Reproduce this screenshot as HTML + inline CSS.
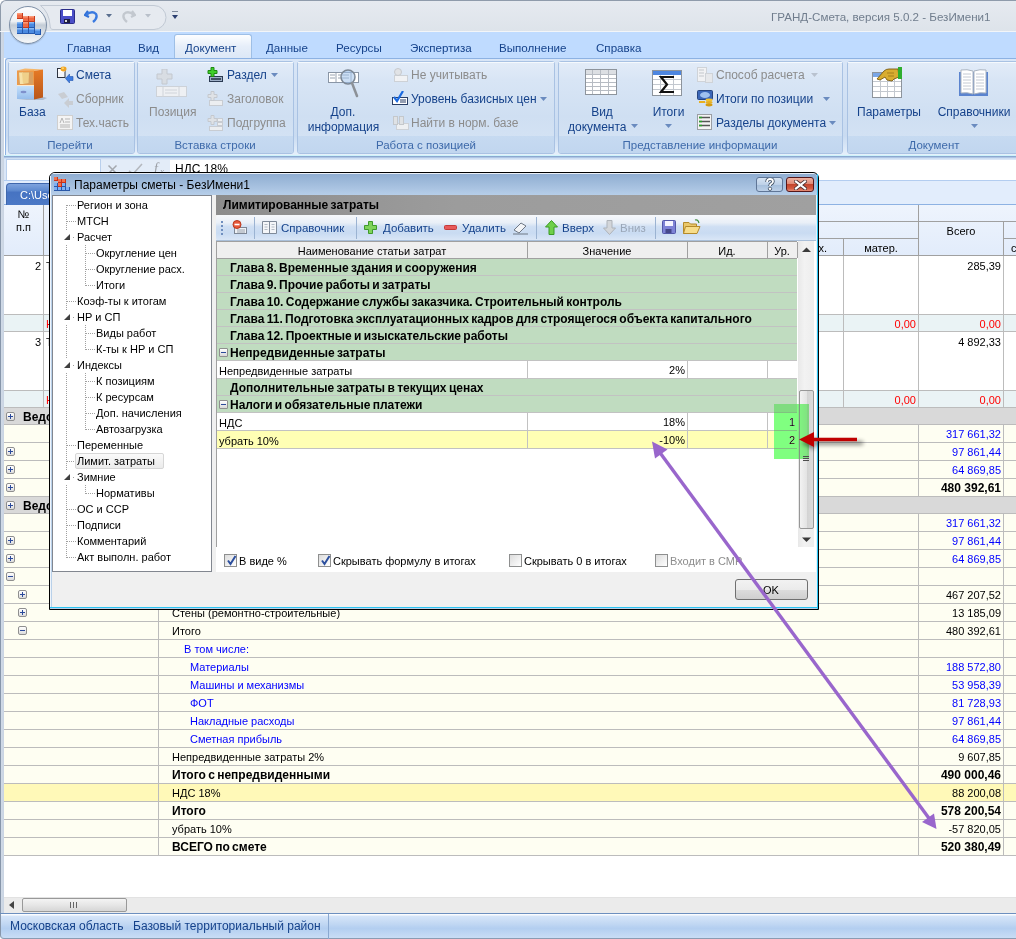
<!DOCTYPE html><html><head><meta charset="utf-8"><style>
*{margin:0;padding:0;box-sizing:border-box}
html,body{width:1016px;height:939px;overflow:hidden;background:#fff}
body{position:relative;font-family:"Liberation Sans",sans-serif;font-size:11px;color:#000}
div,svg{position:absolute}
.t{white-space:nowrap;line-height:16px;font-size:11px}
.b{font-weight:bold;font-size:12px;word-spacing:-1px}
.rb{color:#15428b;font-size:11.5px;line-height:16px;white-space:nowrap}
.gr{color:#8d8d8d}
.gl{color:#3e6aaa;font-size:11.5px;line-height:16px;white-space:nowrap}
</style></head><body>
<div style="left:0px;top:0px;width:1016px;height:939px;background:#fff"></div>
<div style="left:0px;top:0px;width:1016px;height:32px;background:linear-gradient(#e6eaf0,#dde3ea);border-top:1px solid #8f9bab;border-left:1px solid #8f9bab;border-top-left-radius:6px"></div>
<div style="left:0px;top:31px;width:1016px;height:1px;background:#f2f5f8"></div>
<svg style="left:40px;top:4px" width="130" height="27" viewBox="0 0 130 27"><path d="M0.5 1.5 H114 A12 12 0 0 1 114 25.5 H13 Q10 25.5 10 21 Q9 8 0.5 1.5 Z" fill="#e6eaf0" stroke="#c1c9d4"/></svg>
<svg style="left:60px;top:9px" width="15" height="15" viewBox="0 0 15 15"><rect x="0.5" y="0.5" width="14" height="14" rx="1" fill="#4b4fc8" stroke="#2a2c88"/><rect x="3" y="1" width="9" height="6" fill="#fff"/><rect x="4" y="10" width="6" height="4" fill="#1d1d40"/><rect x="5" y="11" width="2" height="2" fill="#ddd"/></svg>
<svg style="left:84px;top:9px" width="15" height="15" viewBox="0 0 15 15"><path d="M4 2 L1 6 L5 8" stroke="#2f6fd6" stroke-width="2.2" fill="none"/><path d="M2 6 Q8 1 12 5 Q14 9 9 13" stroke="#3a7ae0" stroke-width="2.4" fill="none"/></svg>
<svg style="left:106px;top:14px" width="6" height="4"><path d="M0 0 H6 L3 3.5 Z" fill="#5a6f8f"/></svg>
<svg style="left:121px;top:9px" width="15" height="15" viewBox="0 0 15 15"><path d="M11 2 L14 6 L10 8" stroke="#c3c8cf" stroke-width="2.2" fill="none"/><path d="M13 6 Q7 1 3 5 Q1 9 6 13" stroke="#c3c8cf" stroke-width="2.4" fill="none"/></svg>
<svg style="left:145px;top:14px" width="6" height="4"><path d="M0 0 H6 L3 3.5 Z" fill="#b9c0ca"/></svg>
<svg style="left:172px;top:11px" width="7" height="11"><path d="M0 0 H6" stroke="#394a66" stroke-width="1.2"/><path d="M0 4 H6 L3 8 Z" fill="#2b3f70"/></svg>
<div class="t" style="left:771px;top:9px;color:#707d8d;font-size:11.6px;line-height:16px">ГРАНД-Смета, версия 5.0.2 - БезИмени1</div>
<div style="left:0px;top:32px;width:4px;height:881px;background:linear-gradient(90deg,#8796aa 0,#8796aa 1px,#d0dae7 1px,#c9d4e2)"></div>
<div style="left:4px;top:32px;width:1012px;height:26px;background:#bfdbff"></div>
<div style="left:5px;top:58px;width:1011px;height:97px;background:linear-gradient(#d9e6f7,#c9dbf1 80%,#e6f0fb);border:1px solid #8db2e3;border-right:none;border-bottom:none;border-radius:3px 0 0 0"></div>
<div style="left:174px;top:34px;width:78px;height:24px;border:1px solid #9ebfe6;border-bottom:none;border-radius:3px 3px 0 0;background:linear-gradient(#fdfeff,#e6eef9 50%,#dce8f7)"></div>
<div class="t" style="left:67px;top:40px;color:#15428b;font-size:11.6px;line-height:16px">Главная</div>
<div class="t" style="left:138px;top:40px;color:#15428b;font-size:11.6px;line-height:16px">Вид</div>
<div class="t" style="left:185px;top:40px;color:#15428b;font-size:11.6px;line-height:16px">Документ</div>
<div class="t" style="left:266px;top:40px;color:#15428b;font-size:11.6px;line-height:16px">Данные</div>
<div class="t" style="left:336px;top:40px;color:#15428b;font-size:11.6px;line-height:16px">Ресурсы</div>
<div class="t" style="left:410px;top:40px;color:#15428b;font-size:11.6px;line-height:16px">Экспертиза</div>
<div class="t" style="left:499px;top:40px;color:#15428b;font-size:11.6px;line-height:16px">Выполнение</div>
<div class="t" style="left:596px;top:40px;color:#15428b;font-size:11.6px;line-height:16px">Справка</div>
<div style="left:9px;top:6px;width:38px;height:38px;border-radius:50%;border:1px solid #7d8fa6;background:linear-gradient(#fdfdfe 0,#eef1f4 40%,#c3ccd6 50%,#d9dfe6 70%,#f6f8fa 100%);box-shadow:0 1px 1px rgba(0,0,0,0.15)"></div>
<svg style="left:16px;top:13px" width="26" height="23" viewBox="0 0 26 23"><rect x="1" y="0" width="6" height="6" fill="#ef6a45"/><rect x="1" y="0" width="6" height="1.5" fill="#fb9a78"/><path d="M1 5.5 H7 M6.5 0 V6" stroke="#c53a1c"/><rect x="7" y="3" width="6" height="6" fill="#ef6a45"/><rect x="7" y="3" width="6" height="1.5" fill="#fb9a78"/><path d="M7 8.5 H13 M12.5 3 V9" stroke="#c53a1c"/><rect x="13" y="3" width="6" height="6" fill="#ef6a45"/><rect x="13" y="3" width="6" height="1.5" fill="#fb9a78"/><path d="M13 8.5 H19 M18.5 3 V9" stroke="#c53a1c"/><rect x="7" y="9" width="6" height="6" fill="#ef6a45"/><rect x="7" y="9" width="6" height="1.5" fill="#fb9a78"/><path d="M7 14.5 H13 M12.5 9 V15" stroke="#c53a1c"/><rect x="1" y="9" width="6" height="6" fill="#4b8ae0"/><rect x="1" y="9" width="6" height="1.5" fill="#8cbcf5"/><path d="M1 14.5 H7 M6.5 9 V15" stroke="#2659ad"/><rect x="13" y="9" width="6" height="6" fill="#4b8ae0"/><rect x="13" y="9" width="6" height="1.5" fill="#8cbcf5"/><path d="M13 14.5 H19 M18.5 9 V15" stroke="#2659ad"/><rect x="1" y="15" width="6" height="6" fill="#4b8ae0"/><rect x="1" y="15" width="6" height="1.5" fill="#8cbcf5"/><path d="M1 20.5 H7 M6.5 15 V21" stroke="#2659ad"/><rect x="7" y="15" width="6" height="6" fill="#4b8ae0"/><rect x="7" y="15" width="6" height="1.5" fill="#8cbcf5"/><path d="M7 20.5 H13 M12.5 15 V21" stroke="#2659ad"/><rect x="13" y="15" width="6" height="6" fill="#4b8ae0"/><rect x="13" y="15" width="6" height="1.5" fill="#8cbcf5"/><path d="M13 20.5 H19 M18.5 15 V21" stroke="#2659ad"/><rect x="19" y="16" width="6" height="6" fill="#4b8ae0"/><rect x="19" y="16" width="6" height="1.5" fill="#8cbcf5"/><path d="M19 21.5 H25 M24.5 16 V22" stroke="#2659ad"/></svg>
<div style="left:8px;top:61px;width:127px;height:93px;border:1px solid #a9c2e3;border-radius:3px;background:linear-gradient(#e3ecf8 0,#d8e5f5 20%,#cfdff2 60%,#d6e4f5)"></div>
<div style="left:9px;top:136px;width:125px;height:17px;background:linear-gradient(#c6daf1,#c1d6ef);border-radius:0 0 2px 2px"></div>
<div style="left:9px;top:62px;width:125px;height:1px;background:#f5f9fd"></div>
<div class="gl" style="left:-40.0px;top:137px;width:220px;text-align:center;">Перейти</div>
<div style="left:137px;top:61px;width:157px;height:93px;border:1px solid #a9c2e3;border-radius:3px;background:linear-gradient(#e3ecf8 0,#d8e5f5 20%,#cfdff2 60%,#d6e4f5)"></div>
<div style="left:138px;top:136px;width:155px;height:17px;background:linear-gradient(#c6daf1,#c1d6ef);border-radius:0 0 2px 2px"></div>
<div style="left:138px;top:62px;width:155px;height:1px;background:#f5f9fd"></div>
<div class="gl" style="left:105.0px;top:137px;width:220px;text-align:center;">Вставка строки</div>
<div style="left:297px;top:61px;width:258px;height:93px;border:1px solid #a9c2e3;border-radius:3px;background:linear-gradient(#e3ecf8 0,#d8e5f5 20%,#cfdff2 60%,#d6e4f5)"></div>
<div style="left:298px;top:136px;width:256px;height:17px;background:linear-gradient(#c6daf1,#c1d6ef);border-radius:0 0 2px 2px"></div>
<div style="left:298px;top:62px;width:256px;height:1px;background:#f5f9fd"></div>
<div class="gl" style="left:316.0px;top:137px;width:220px;text-align:center;">Работа с позицией</div>
<div style="left:558px;top:61px;width:285px;height:93px;border:1px solid #a9c2e3;border-radius:3px;background:linear-gradient(#e3ecf8 0,#d8e5f5 20%,#cfdff2 60%,#d6e4f5)"></div>
<div style="left:559px;top:136px;width:283px;height:17px;background:linear-gradient(#c6daf1,#c1d6ef);border-radius:0 0 2px 2px"></div>
<div style="left:559px;top:62px;width:283px;height:1px;background:#f5f9fd"></div>
<div class="gl" style="left:590.0px;top:137px;width:220px;text-align:center;">Представление информации</div>
<div style="left:847px;top:61px;width:173px;height:93px;border:1px solid #a9c2e3;border-radius:3px;background:linear-gradient(#e3ecf8 0,#d8e5f5 20%,#cfdff2 60%,#d6e4f5)"></div>
<div style="left:848px;top:136px;width:171px;height:17px;background:linear-gradient(#c6daf1,#c1d6ef);border-radius:0 0 2px 2px"></div>
<div style="left:848px;top:62px;width:171px;height:1px;background:#f5f9fd"></div>
<div class="gl" style="left:824.0px;top:137px;width:220px;text-align:center;">Документ</div>
<svg style="left:16px;top:67px" width="32" height="34" viewBox="0 0 32 34"><defs><linearGradient id="bz1" x1="0" y1="0" x2="0" y2="1"><stop offset="0" stop-color="#e67a26"/><stop offset="1" stop-color="#b9561a"/></linearGradient><linearGradient id="bz2" x1="0" y1="0" x2="0" y2="1"><stop offset="0" stop-color="#c4e0fb"/><stop offset="1" stop-color="#96bdec"/></linearGradient></defs><path d="M2 33 L27 33 L31 31 L28 30 Z" fill="rgba(60,80,110,0.25)"/><path d="M1 3.5 L9 1.5 L27 2.5 L18 4 Z" fill="#f6b76a"/><path d="M18 4 L27 2.5 L27 30.5 L18 32.5 Z" fill="url(#bz1)"/><rect x="1" y="3.5" width="17" height="15" fill="#ee9a48"/><rect x="2.5" y="5" width="14.5" height="12.5" fill="#d9a060"/><path d="M3 5.5 L7 5.5 L8 17 L4 17 Z" fill="#f7e2a8"/><path d="M6 5.5 L13 5.5 L12.5 16 L7 17 Z" fill="#efd08a"/><rect x="1" y="18" width="17" height="1.2" fill="#fbe9d0"/><rect x="1" y="19" width="17" height="13" fill="url(#bz2)"/><ellipse cx="7.5" cy="25" rx="3" ry="1.3" fill="#7e90cc"/></svg>
<div class="t" style="left:19px;top:104px;color:#15428b;font-size:12px;line-height:16px">База</div>
<svg style="left:57px;top:66px" width="17" height="18" viewBox="0 0 17 18"><rect x="0.5" y="2.5" width="7.5" height="9" fill="#f4f6fa" stroke="#2e3440"/><rect x="1" y="3" width="6.5" height="3" fill="#fff"/><ellipse cx="6.5" cy="3" rx="3" ry="2.4" fill="#f0a424"/><ellipse cx="5.8" cy="2.3" rx="1.3" ry="1" fill="#ffd36a"/><path d="M8.5 12.5 L12.5 8 V10.5 H16 V14.5 H12.5 V17 Z" fill="#3b7be2" stroke="#2456b0" stroke-width="0.6"/></svg>
<div class="t" style="left:76px;top:67px;color:#15428b;font-size:12px;line-height:16px">Смета</div>
<svg style="left:57px;top:91px" width="17" height="17" viewBox="0 0 17 17"><path d="M1 3 L7 1 L11 6 L5 8 Z" fill="#c9cdd3"/><path d="M16 10 L12 10 L12 7 L7 12 L12 17 L12 14 L16 14 Z" fill="#c9cdd3"/></svg>
<div class="t" style="left:76px;top:91px;color:#8c8c8c;font-size:12px;line-height:16px">Сборник</div>
<svg style="left:57px;top:115px" width="16" height="15" viewBox="0 0 16 15"><rect x="0.5" y="0.5" width="15" height="14" fill="#f4f4f4" stroke="#cfcfcf"/><path d="M3 8 L5 3 L7 8 M8 4 H13 M8 7 H13 M3 10 H13 M3 12 H13" stroke="#b5b5b5" fill="none"/></svg>
<div class="t" style="left:76px;top:115px;color:#8c8c8c;font-size:12px;line-height:16px">Тех.часть</div>
<svg style="left:156px;top:69px" width="32" height="29" viewBox="0 0 32 29"><path d="M6 0 H11 V5 H16 V10 H11 V15 H6 V10 H1 V5 H6 Z" fill="#d8dde3" stroke="#c3c8cf"/><rect x="0.5" y="17.5" width="30" height="10" fill="#eef0f3" stroke="#cdd2d8"/><path d="M7 18 V28 M23 18 V28 M9 21 H21 M9 24 H21" stroke="#d0d4da"/></svg>
<div class="t" style="left:149px;top:104px;color:#8c8c8c;font-size:12px;line-height:16px">Позиция</div>
<svg style="left:207px;top:67px" width="17" height="16" viewBox="0 0 17 16"><rect x="2.5" y="9.5" width="13" height="5" fill="#9fb0c8" stroke="#2b3a52"/><path d="M4 12 H14" stroke="#1b2738" stroke-width="1.4"/><path d="M4 0.5 H7 V3.5 H10 V6.5 H7 V9.5 H4 V6.5 H1 V3.5 H4 Z" fill="#3fcf2a" stroke="#1f8a10"/></svg>
<div class="t" style="left:227px;top:67px;color:#15428b;font-size:12px;line-height:16px">Раздел</div>
<svg style="left:271px;top:73px" width="7" height="4"><path d="M0 0 L7 0 L3.5 4 Z" fill="#6a8bbf"/></svg>
<svg style="left:207px;top:91px" width="17" height="16" viewBox="0 0 17 16"><rect x="2.5" y="9.5" width="13" height="5" fill="#eceef1" stroke="#c8ccd2"/><path d="M4 0.5 H7 V3.5 H10 V6.5 H7 V9.5 H4 V6.5 H1 V3.5 H4 Z" fill="#dfe2e6" stroke="#c4c8ce"/></svg>
<div class="t" style="left:227px;top:91px;color:#8c8c8c;font-size:12px;line-height:16px">Заголовок</div>
<svg style="left:207px;top:115px" width="17" height="16" viewBox="0 0 17 16"><rect x="2.5" y="11.5" width="13" height="4" fill="#eceef1" stroke="#c8ccd2"/><rect x="10.5" y="3.5" width="5" height="3" fill="#eceef1" stroke="#c8ccd2"/><rect x="10.5" y="7.5" width="5" height="3" fill="#eceef1" stroke="#c8ccd2"/><path d="M4 0.5 H7 V3.5 H10 V6.5 H7 V9.5 H4 V6.5 H1 V3.5 H4 Z" fill="#dfe2e6" stroke="#c4c8ce"/></svg>
<div class="t" style="left:227px;top:115px;color:#8c8c8c;font-size:12px;line-height:16px">Подгруппа</div>
<svg style="left:327px;top:67px" width="34" height="32" viewBox="0 0 34 32"><rect x="1.5" y="5.5" width="30" height="10" fill="#fff" stroke="#8a96a6"/><path d="M9 6 V15 M24 6 V15 M3 8 H8 M3 11 H8 M11 8 H22 M11 11 H22" stroke="#9aa4b2"/><circle cx="21" cy="10" r="7" fill="rgba(160,195,235,0.55)" stroke="#7c8794" stroke-width="1.5"/><path d="M25 16 L30 29" stroke="#8c9197" stroke-width="2.5" stroke-linecap="round"/></svg>
<div class="t" style="left:303.0px;top:104px;width:80px;text-align:center;color:#15428b;font-size:12px;line-height:16px">Доп.</div>
<div class="t" style="left:293.5px;top:119px;width:100px;text-align:center;color:#15428b;font-size:12px;line-height:16px">информация</div>
<svg style="left:392px;top:68px" width="16" height="15" viewBox="0 0 16 15"><rect x="2.5" y="7.5" width="13" height="6" fill="#f1f2f4" stroke="#cdd1d6"/><circle cx="6" cy="4" r="3.5" fill="#e1e3e6" stroke="#c6c9cd"/></svg>
<div class="t" style="left:411px;top:67px;color:#8c8c8c;font-size:12px;line-height:16px">Не учитывать</div>
<svg style="left:392px;top:91px" width="16" height="15" viewBox="0 0 16 15"><rect x="0.5" y="6.5" width="15" height="7" fill="#fff" stroke="#2a3f66"/><path d="M8 9 H14 M8 11 H14" stroke="#2a3f66"/><path d="M2 6 L5 10 L11 0" stroke="#1a6ae0" stroke-width="2.2" fill="none"/></svg>
<div class="t" style="left:411px;top:91px;color:#15428b;font-size:12px;line-height:16px">Уровень базисных цен</div>
<svg style="left:540px;top:97px" width="7" height="4"><path d="M0 0 L7 0 L3.5 4 Z" fill="#6a8bbf"/></svg>
<svg style="left:392px;top:115px" width="17" height="16" viewBox="0 0 17 16"><rect x="4.5" y="8.5" width="12" height="6" fill="#eef0f2" stroke="#cdd1d6"/><rect x="1.5" y="1.5" width="4" height="8" fill="#dfe2e5" stroke="#c4c8cc"/><rect x="7.5" y="1.5" width="4" height="8" fill="#dfe2e5" stroke="#c4c8cc"/></svg>
<div class="t" style="left:411px;top:115px;color:#8c8c8c;font-size:12px;line-height:16px">Найти в норм. базе</div>
<svg style="left:585px;top:69px" width="33" height="27" viewBox="0 0 33 27"><rect x="0.5" y="0.5" width="31" height="25" fill="#fff" stroke="#8d949c"/><rect x="1" y="1" width="30" height="4" fill="#dcdfe3"/><path d="M1 5.5 H31 M1 9.5 H31 M1 13.5 H31 M1 17.5 H31 M1 21.5 H31 M7.5 1 V25 M15.5 1 V25 M23.5 1 V25" stroke="#b7bcc3"/></svg>
<div class="t" style="left:572.0px;top:104px;width:60px;text-align:center;color:#15428b;font-size:12px;line-height:16px">Вид</div>
<div class="t" style="left:568px;top:119px;color:#15428b;font-size:12px;line-height:16px">документа</div>
<svg style="left:631px;top:124px" width="7" height="4"><path d="M0 0 L7 0 L3.5 4 Z" fill="#6a8bbf"/></svg>
<svg style="left:652px;top:70px" width="31" height="27" viewBox="0 0 31 27"><rect x="0.5" y="0.5" width="29" height="25" fill="#fff" stroke="#8d949c"/><rect x="1" y="1" width="28" height="4" fill="#4d86e0"/><path d="M1 9.5 H29 M1 14.5 H29 M1 19.5 H29 M8.5 5 V25 M21.5 5 V25" stroke="#c3c8cf"/><path d="M22 7 H9 L15 14.5 L9 22 H22" stroke="#111" stroke-width="2.2" fill="none"/></svg>
<div class="t" style="left:638.5px;top:104px;width:60px;text-align:center;color:#15428b;font-size:12px;line-height:16px">Итоги</div>
<svg style="left:665px;top:124px" width="7" height="4"><path d="M0 0 L7 0 L3.5 4 Z" fill="#6a8bbf"/></svg>
<svg style="left:697px;top:67px" width="16" height="16" viewBox="0 0 16 16"><rect x="0.5" y="0.5" width="9" height="14" fill="#f1f2f4" stroke="#cfd3d8"/><rect x="8.5" y="6.5" width="7" height="9" fill="#e6e8eb" stroke="#cfd3d8"/><path d="M2 3 H7 M2 6 H7 M2 9 H7" stroke="#c3c7cc"/></svg>
<div class="t" style="left:716px;top:67px;color:#8c8c8c;font-size:12px;line-height:16px">Способ расчета</div>
<svg style="left:811px;top:73px" width="7" height="4"><path d="M0 0 L7 0 L3.5 4 Z" fill="#b9c2cf"/></svg>
<svg style="left:697px;top:90px" width="17" height="17" viewBox="0 0 17 17"><rect x="0.5" y="0.5" width="15" height="9" rx="1" fill="#3b67b8" stroke="#27457f"/><ellipse cx="8" cy="5" rx="5" ry="3" fill="#9fc1ef"/><ellipse cx="12" cy="10" rx="3.5" ry="1.4" fill="#f2c230"/><ellipse cx="12" cy="12.5" rx="3.5" ry="1.4" fill="#e8b020"/><ellipse cx="12" cy="15" rx="3.5" ry="1.4" fill="#d49a10"/><path d="M2 12 H8" stroke="#e8b020" stroke-width="2"/></svg>
<div class="t" style="left:716px;top:91px;color:#15428b;font-size:12px;line-height:16px">Итоги по позиции</div>
<svg style="left:823px;top:97px" width="7" height="4"><path d="M0 0 L7 0 L3.5 4 Z" fill="#6a8bbf"/></svg>
<svg style="left:697px;top:114px" width="15" height="16" viewBox="0 0 15 16"><rect x="0.5" y="0.5" width="14" height="15" fill="#f4f4f4" stroke="#9a9ea4"/><path d="M2 3.5 H13 M2 7.5 H13 M2 11.5 H13" stroke="#555" stroke-width="1.6"/><path d="M2 3.5 H5 M2 7.5 H5 M2 11.5 H5" stroke="#2aa02a" stroke-width="1.6"/></svg>
<div class="t" style="left:716px;top:115px;color:#15428b;font-size:12px;line-height:16px">Разделы документа</div>
<svg style="left:829px;top:121px" width="7" height="4"><path d="M0 0 L7 0 L3.5 4 Z" fill="#6a8bbf"/></svg>
<svg style="left:872px;top:67px" width="32" height="32" viewBox="0 0 32 32"><rect x="0.5" y="5.5" width="29" height="25" fill="#fff" stroke="#8d949c"/><rect x="1" y="6" width="28" height="4" fill="#7aa6e6"/><path d="M1 14.5 H29 M1 19.5 H29 M1 24.5 H29 M8.5 10 V30 M15.5 10 V30 M22.5 10 V30" stroke="#c3c8cf"/><path d="M5 12 L12 4 Q14 2 17 2 L26 2 L27 10 L22 12 L20 14 L15 13 L13 10 L8 13 Z" fill="#d9ad30" stroke="#7a5a10" stroke-width="0.9"/><path d="M15 6 L22 6 M16 9 L22 9" stroke="#9a7418" stroke-width="0.8"/><rect x="26" y="0" width="4" height="12" fill="#2fae2f"/></svg>
<div class="t" style="left:844.0px;top:104px;width:90px;text-align:center;color:#15428b;font-size:12px;line-height:16px">Параметры</div>
<svg style="left:958px;top:69px" width="31" height="28" viewBox="0 0 31 28"><path d="M1 3 H30 V27 H1 Z" fill="#5b84cf"/><path d="M3 1 Q9 0 15 2 V25 Q9 23 3 24 Z" fill="#fff" stroke="#a9b3c0"/><path d="M16 2 Q22 0 28 1 V24 Q22 23 16 25 Z" fill="#fff" stroke="#a9b3c0"/><path d="M5 5 H13 M5 8 H13 M5 11 H13 M5 14 H13 M5 17 H13 M5 20 H13 M18 5 H26 M18 8 H26 M18 11 H26 M18 14 H26 M18 17 H26 M18 20 H26" stroke="#c4cad3"/></svg>
<div class="t" style="left:929.0px;top:104px;width:90px;text-align:center;color:#15428b;font-size:12px;line-height:16px">Справочники</div>
<svg style="left:971px;top:124px" width="7" height="4"><path d="M0 0 L7 0 L3.5 4 Z" fill="#6a8bbf"/></svg>
<div style="left:4px;top:155px;width:1012px;height:25px;background:linear-gradient(#cdf3fb 0,#cdf3fb 1px,#7e9bc4 1px,#98b6dd 2px,#c3d6ee 3px,#dbe7f7 4px,#dbe7f7)"></div>
<div style="left:6px;top:159px;width:95px;height:22px;background:#fff;border:1px solid #b9cfec"></div>
<div style="left:101px;top:160px;width:69px;height:20px;background:#e3ecf8"></div>
<div style="left:170px;top:160px;width:846px;height:20px;background:#fff"></div>
<svg style="left:105px;top:160px" width="64" height="14" viewBox="0 0 64 14"><path d="M3.5 5.5 L11.5 13.5 M11.5 5.5 L3.5 13.5" stroke="#a4a8ae" stroke-width="1.5"/><path d="M24 11 L28 14 L37 4" stroke="#b4b8be" stroke-width="1.6" fill="none"/><text x="49" y="13" font-family="Liberation Serif" font-style="italic" font-size="14" fill="#9a9ea4">f</text><text x="55" y="14" font-family="Liberation Serif" font-style="italic" font-size="9" fill="#9a9ea4">x</text></svg>
<div class="t" style="left:175px;top:161px;font-size:12px;line-height:16px">НДС 18%</div>
<div style="left:4px;top:180px;width:1012px;height:25px;background:#e2edfc;border-top:1px solid #b3cdf0;border-bottom:1px solid #8db2e3"></div>
<div style="left:6px;top:183px;width:120px;height:22px;background:linear-gradient(#7ea3de,#5f8bd0 30%,#4673c2 40%,#4c79c6);border:1px solid #3f67ad;border-bottom:none;border-radius:4px 4px 0 0"></div>
<div class="t" style="left:20px;top:187px;color:#fff;font-size:11px">C:\Users\User\Documents</div>
<div style="left:4px;top:205px;width:1012px;height:50px;background:linear-gradient(#eef4fd,#e2ecfb)"></div>
<div style="left:43px;top:205px;width:1px;height:50px;background:#a0a0a0"></div>
<div style="left:158px;top:205px;width:1px;height:50px;background:#a0a0a0"></div>
<div style="left:918px;top:205px;width:1px;height:50px;background:#a0a0a0"></div>
<div style="left:1003px;top:222px;width:1px;height:33px;background:#a0a0a0"></div>
<div style="left:843px;top:238px;width:1px;height:17px;background:#a0a0a0"></div>
<div style="left:800px;top:221px;width:216px;height:1px;background:#a0a0a0"></div>
<div style="left:800px;top:238px;width:118px;height:1px;background:#a0a0a0"></div>
<div style="left:1003px;top:238px;width:13px;height:1px;background:#a0a0a0"></div>
<div style="left:4px;top:255px;width:1012px;height:1px;background:#a0a0a0"></div>
<div class="t" style="left:3.5px;top:206px;width:40px;text-align:center;">№</div>
<div class="t" style="left:3.5px;top:219px;width:40px;text-align:center;">п.п</div>
<div class="t" style="left:921.0px;top:223px;width:80px;text-align:center;">Всего</div>
<div class="t" style="left:846.0px;top:240px;width:70px;text-align:center;">матер.</div>
<div class="t" style="right:189px;top:240px;text-align:right;">х.</div>
<div class="t" style="left:1011px;top:240px;">с</div>
<div style="left:4px;top:256px;width:1012px;height:641px;background:#fff"></div>
<div style="left:4px;top:256px;width:1012px;height:58px;background:#fff"></div>
<div style="left:4px;top:314px;width:1012px;height:1px;background:#bcbcbc"></div>
<div style="left:4px;top:315px;width:1012px;height:16px;background:#eaf3f5"></div>
<div style="left:4px;top:331px;width:1012px;height:1px;background:#bcbcbc"></div>
<div style="left:4px;top:332px;width:1012px;height:58px;background:#fff"></div>
<div style="left:4px;top:390px;width:1012px;height:1px;background:#bcbcbc"></div>
<div style="left:4px;top:391px;width:1012px;height:16px;background:#eaf3f5"></div>
<div style="left:4px;top:407px;width:1012px;height:1px;background:#bcbcbc"></div>
<div style="left:4px;top:408px;width:1012px;height:16px;background:#d9d9d9"></div>
<div style="left:4px;top:424px;width:1012px;height:1px;background:#bcbcbc"></div>
<div style="left:4px;top:425px;width:1012px;height:17px;background:#fefef2"></div>
<div style="left:4px;top:442px;width:1012px;height:1px;background:#bcbcbc"></div>
<div style="left:4px;top:443px;width:1012px;height:17px;background:#fefef2"></div>
<div style="left:4px;top:460px;width:1012px;height:1px;background:#bcbcbc"></div>
<div style="left:4px;top:461px;width:1012px;height:17px;background:#fefef2"></div>
<div style="left:4px;top:478px;width:1012px;height:1px;background:#bcbcbc"></div>
<div style="left:4px;top:479px;width:1012px;height:17px;background:#fefef2"></div>
<div style="left:4px;top:496px;width:1012px;height:1px;background:#bcbcbc"></div>
<div style="left:4px;top:497px;width:1012px;height:16px;background:#d9d9d9"></div>
<div style="left:4px;top:513px;width:1012px;height:1px;background:#bcbcbc"></div>
<div style="left:4px;top:514px;width:1012px;height:17px;background:#fefef2"></div>
<div style="left:4px;top:531px;width:1012px;height:1px;background:#bcbcbc"></div>
<div style="left:4px;top:532px;width:1012px;height:17px;background:#fefef2"></div>
<div style="left:4px;top:549px;width:1012px;height:1px;background:#bcbcbc"></div>
<div style="left:4px;top:550px;width:1012px;height:17px;background:#fefef2"></div>
<div style="left:4px;top:567px;width:1012px;height:1px;background:#bcbcbc"></div>
<div style="left:4px;top:568px;width:1012px;height:17px;background:#fefef2"></div>
<div style="left:4px;top:585px;width:1012px;height:1px;background:#bcbcbc"></div>
<div style="left:4px;top:586px;width:1012px;height:17px;background:#fefef2"></div>
<div style="left:4px;top:603px;width:1012px;height:1px;background:#bcbcbc"></div>
<div style="left:4px;top:604px;width:1012px;height:17px;background:#fefef2"></div>
<div style="left:4px;top:621px;width:1012px;height:1px;background:#bcbcbc"></div>
<div style="left:4px;top:622px;width:1012px;height:17px;background:#fefef2"></div>
<div style="left:4px;top:639px;width:1012px;height:1px;background:#bcbcbc"></div>
<div style="left:4px;top:640px;width:1012px;height:17px;background:#fefef2"></div>
<div style="left:4px;top:657px;width:1012px;height:1px;background:#bcbcbc"></div>
<div style="left:4px;top:658px;width:1012px;height:17px;background:#fefef2"></div>
<div style="left:4px;top:675px;width:1012px;height:1px;background:#bcbcbc"></div>
<div style="left:4px;top:676px;width:1012px;height:17px;background:#fefef2"></div>
<div style="left:4px;top:693px;width:1012px;height:1px;background:#bcbcbc"></div>
<div style="left:4px;top:694px;width:1012px;height:17px;background:#fefef2"></div>
<div style="left:4px;top:711px;width:1012px;height:1px;background:#bcbcbc"></div>
<div style="left:4px;top:712px;width:1012px;height:17px;background:#fefef2"></div>
<div style="left:4px;top:729px;width:1012px;height:1px;background:#bcbcbc"></div>
<div style="left:4px;top:730px;width:1012px;height:17px;background:#fefef2"></div>
<div style="left:4px;top:747px;width:1012px;height:1px;background:#bcbcbc"></div>
<div style="left:4px;top:748px;width:1012px;height:17px;background:#fefef2"></div>
<div style="left:4px;top:765px;width:1012px;height:1px;background:#bcbcbc"></div>
<div style="left:4px;top:766px;width:1012px;height:17px;background:#fefef2"></div>
<div style="left:4px;top:783px;width:1012px;height:1px;background:#bcbcbc"></div>
<div style="left:4px;top:784px;width:1012px;height:17px;background:#fff9b8"></div>
<div style="left:4px;top:801px;width:1012px;height:1px;background:#bcbcbc"></div>
<div style="left:4px;top:802px;width:1012px;height:17px;background:#fefef2"></div>
<div style="left:4px;top:819px;width:1012px;height:1px;background:#bcbcbc"></div>
<div style="left:4px;top:820px;width:1012px;height:17px;background:#fefef2"></div>
<div style="left:4px;top:837px;width:1012px;height:1px;background:#bcbcbc"></div>
<div style="left:4px;top:838px;width:1012px;height:17px;background:#fefef2"></div>
<div style="left:4px;top:855px;width:1012px;height:1px;background:#bcbcbc"></div>
<div style="left:43px;top:256px;width:1px;height:151px;background:#bcbcbc"></div>
<div style="left:158px;top:256px;width:1px;height:151px;background:#bcbcbc"></div>
<div style="left:843px;top:256px;width:1px;height:151px;background:#bcbcbc"></div>
<div style="left:918px;top:256px;width:1px;height:151px;background:#bcbcbc"></div>
<div style="left:1003px;top:256px;width:1px;height:151px;background:#bcbcbc"></div>
<div style="left:158px;top:425px;width:1px;height:430px;background:#bcbcbc"></div>
<div style="left:918px;top:425px;width:1px;height:71px;background:#bcbcbc"></div>
<div style="left:1003px;top:425px;width:1px;height:71px;background:#bcbcbc"></div>
<div style="left:918px;top:514px;width:1px;height:341px;background:#bcbcbc"></div>
<div style="left:1003px;top:514px;width:1px;height:341px;background:#bcbcbc"></div>
<div class="t" style="right:975px;top:258px;text-align:right;">2</div>
<div class="t" style="left:46px;top:258px;">Т</div>
<div class="t" style="right:15px;top:258px;text-align:right;">285,39</div>
<div class="t" style="left:46px;top:316px;color:#f00">Н</div>
<div class="t" style="right:100px;top:316px;text-align:right;color:#f00">0,00</div>
<div class="t" style="right:15px;top:316px;text-align:right;color:#f00">0,00</div>
<div class="t" style="right:975px;top:334px;text-align:right;">3</div>
<div class="t" style="left:46px;top:334px;">Т</div>
<div class="t" style="right:15px;top:334px;text-align:right;">4 892,33</div>
<div class="t" style="left:46px;top:392px;color:#f00">Н</div>
<div class="t" style="right:100px;top:392px;text-align:right;color:#f00">0,00</div>
<div class="t" style="right:15px;top:392px;text-align:right;color:#f00">0,00</div>
<div class="t" style="right:15px;top:426px;text-align:right;color:#0000ff;">317 661,32</div>
<div class="t" style="right:15px;top:444px;text-align:right;color:#0000ff;">97 861,44</div>
<div class="t" style="right:15px;top:462px;text-align:right;color:#0000ff;">64 869,85</div>
<div class="t b" style="right:15px;top:480px;text-align:right;color:#000;word-spacing:0;">480 392,61</div>
<div class="t" style="right:15px;top:515px;text-align:right;color:#0000ff;">317 661,32</div>
<div class="t" style="right:15px;top:533px;text-align:right;color:#0000ff;">97 861,44</div>
<div class="t" style="right:15px;top:551px;text-align:right;color:#0000ff;">64 869,85</div>
<div class="t" style="right:15px;top:587px;text-align:right;color:#000;">467 207,52</div>
<div class="t" style="right:15px;top:605px;text-align:right;color:#000;">13 185,09</div>
<div class="t" style="right:15px;top:623px;text-align:right;color:#000;">480 392,61</div>
<div class="t" style="right:15px;top:659px;text-align:right;color:#0000ff;">188 572,80</div>
<div class="t" style="right:15px;top:677px;text-align:right;color:#0000ff;">53 958,39</div>
<div class="t" style="right:15px;top:695px;text-align:right;color:#0000ff;">81 728,93</div>
<div class="t" style="right:15px;top:713px;text-align:right;color:#0000ff;">97 861,44</div>
<div class="t" style="right:15px;top:731px;text-align:right;color:#0000ff;">64 869,85</div>
<div class="t" style="right:15px;top:749px;text-align:right;color:#000;">9 607,85</div>
<div class="t b" style="right:15px;top:767px;text-align:right;color:#000;word-spacing:0;">490 000,46</div>
<div class="t" style="right:15px;top:785px;text-align:right;color:#000;">88 200,08</div>
<div class="t b" style="right:15px;top:803px;text-align:right;color:#000;word-spacing:0;">578 200,54</div>
<div class="t" style="right:15px;top:821px;text-align:right;color:#000;">-57 820,05</div>
<div class="t b" style="right:15px;top:839px;text-align:right;color:#000;word-spacing:0;">520 380,49</div>
<div class="t" style="left:172px;top:605px;color:#000">Стены (ремонтно-строительные)</div>
<div class="t" style="left:172px;top:623px;color:#000">Итого</div>
<div class="t" style="left:184px;top:641px;color:#0000ff">В том числе:</div>
<div class="t" style="left:190px;top:659px;color:#0000ff">Материалы</div>
<div class="t" style="left:190px;top:677px;color:#0000ff">Машины и механизмы</div>
<div class="t" style="left:190px;top:695px;color:#0000ff">ФОТ</div>
<div class="t" style="left:190px;top:713px;color:#0000ff">Накладные расходы</div>
<div class="t" style="left:190px;top:731px;color:#0000ff">Сметная прибыль</div>
<div class="t" style="left:172px;top:749px;color:#000">Непредвиденные затраты 2%</div>
<div class="t b" style="left:172px;top:767px;color:#000">Итого с непредвиденными</div>
<div class="t" style="left:172px;top:785px;color:#000">НДС 18%</div>
<div class="t b" style="left:172px;top:803px;color:#000">Итого</div>
<div class="t" style="left:172px;top:821px;color:#000">убрать 10%</div>
<div class="t b" style="left:172px;top:839px;color:#000">ВСЕГО по смете</div>
<div class="t b" style="left:23px;top:409px;">Ведомость ресурсов</div>
<div class="t b" style="left:23px;top:498px;">Ведомость ресурсов</div>
<div style="left:6px;top:412px;width:9px;height:9px;border:1px solid #8f8f8f;border-radius:2px;background:linear-gradient(#fff,#dcdcdc)"><div style="left:1px;top:3px;width:5px;height:1px;background:#2b4a9a"></div><div style="left:3px;top:1px;width:1px;height:5px;background:#2b4a9a"></div></div>
<div style="left:6px;top:447px;width:9px;height:9px;border:1px solid #8f8f8f;border-radius:2px;background:linear-gradient(#fff,#dcdcdc)"><div style="left:1px;top:3px;width:5px;height:1px;background:#2b4a9a"></div><div style="left:3px;top:1px;width:1px;height:5px;background:#2b4a9a"></div></div>
<div style="left:6px;top:465px;width:9px;height:9px;border:1px solid #8f8f8f;border-radius:2px;background:linear-gradient(#fff,#dcdcdc)"><div style="left:1px;top:3px;width:5px;height:1px;background:#2b4a9a"></div><div style="left:3px;top:1px;width:1px;height:5px;background:#2b4a9a"></div></div>
<div style="left:6px;top:483px;width:9px;height:9px;border:1px solid #8f8f8f;border-radius:2px;background:linear-gradient(#fff,#dcdcdc)"><div style="left:1px;top:3px;width:5px;height:1px;background:#2b4a9a"></div><div style="left:3px;top:1px;width:1px;height:5px;background:#2b4a9a"></div></div>
<div style="left:6px;top:501px;width:9px;height:9px;border:1px solid #8f8f8f;border-radius:2px;background:linear-gradient(#fff,#dcdcdc)"><div style="left:1px;top:3px;width:5px;height:1px;background:#2b4a9a"></div><div style="left:3px;top:1px;width:1px;height:5px;background:#2b4a9a"></div></div>
<div style="left:6px;top:536px;width:9px;height:9px;border:1px solid #8f8f8f;border-radius:2px;background:linear-gradient(#fff,#dcdcdc)"><div style="left:1px;top:3px;width:5px;height:1px;background:#2b4a9a"></div><div style="left:3px;top:1px;width:1px;height:5px;background:#2b4a9a"></div></div>
<div style="left:6px;top:554px;width:9px;height:9px;border:1px solid #8f8f8f;border-radius:2px;background:linear-gradient(#fff,#dcdcdc)"><div style="left:1px;top:3px;width:5px;height:1px;background:#2b4a9a"></div><div style="left:3px;top:1px;width:1px;height:5px;background:#2b4a9a"></div></div>
<div style="left:6px;top:572px;width:9px;height:9px;border:1px solid #8f8f8f;border-radius:2px;background:linear-gradient(#fff,#dcdcdc)"><div style="left:1px;top:3px;width:5px;height:1px;background:#2b4a9a"></div></div>
<div style="left:18px;top:590px;width:9px;height:9px;border:1px solid #8f8f8f;border-radius:2px;background:linear-gradient(#fff,#dcdcdc)"><div style="left:1px;top:3px;width:5px;height:1px;background:#2b4a9a"></div><div style="left:3px;top:1px;width:1px;height:5px;background:#2b4a9a"></div></div>
<div style="left:18px;top:608px;width:9px;height:9px;border:1px solid #8f8f8f;border-radius:2px;background:linear-gradient(#fff,#dcdcdc)"><div style="left:1px;top:3px;width:5px;height:1px;background:#2b4a9a"></div><div style="left:3px;top:1px;width:1px;height:5px;background:#2b4a9a"></div></div>
<div style="left:18px;top:626px;width:9px;height:9px;border:1px solid #8f8f8f;border-radius:2px;background:linear-gradient(#fff,#dcdcdc)"><div style="left:1px;top:3px;width:5px;height:1px;background:#2b4a9a"></div></div>
<div style="left:4px;top:897px;width:1012px;height:16px;background:#ebebeb;border-top:1px solid #e2e2e2"></div>
<svg style="left:8px;top:900px" width="8" height="10"><path d="M6 1 L1 5 L6 9 Z" fill="#444"/></svg>
<div style="left:22px;top:898px;width:105px;height:14px;background:linear-gradient(#f4f4f4,#e6e6e6 50%,#d6d6d6);border:1px solid #999;border-radius:2px"></div>
<div style="left:70px;top:902px;width:1px;height:6px;background:#666"></div>
<div style="left:73px;top:902px;width:1px;height:6px;background:#666"></div>
<div style="left:76px;top:902px;width:1px;height:6px;background:#666"></div>
<div style="left:0px;top:913px;width:1016px;height:26px;background:linear-gradient(#fafcff 0,#fafcff 1px,#d6e5f9 2px,#c2d8f3 40%,#b3cef0 60%,#c9ddf5 100%);border-top:1px solid #6d8fbf;border-bottom:1px solid #8a9bb2;border-left:1px solid #8796aa;border-bottom-left-radius:4px"></div>
<div style="left:0px;top:913px;width:1px;height:1px;background:#6d8fbf"></div>
<div style="left:328px;top:914px;width:1px;height:25px;background:#8aa8d0"></div>
<div class="t" style="left:10px;top:918px;color:#15428b;font-size:12px;line-height:16px">Московская область</div>
<div class="t" style="left:133px;top:918px;color:#15428b;font-size:12px;line-height:16px">Базовый территориальный район</div>
<div style="left:49px;top:172px;width:770px;height:438px;background:#b9d1ea;border:1px solid #000;border-radius:6px 6px 0 0"></div>
<div style="left:50px;top:173px;width:767px;height:22px;background:linear-gradient(#e8eef6 0,#e8eef6 1px,#8fadd1 1px,#b6cee9);border-radius:5px 5px 0 0"></div>
<div style="left:50px;top:176px;width:1px;height:431px;background:#eef4fb"></div>
<div style="left:817px;top:174px;width:1px;height:435px;background:#29c4f2"></div>
<div style="left:816px;top:195px;width:1px;height:412px;background:#e6f2fb"></div>
<div style="left:50px;top:607px;width:767px;height:1px;background:#29c4f2"></div>
<svg style="left:53px;top:176px" width="18" height="16" viewBox="0 0 18 16"><rect x="1" y="1" width="4" height="4" fill="#f4704c"/><path d="M1 4.5 H5 M4.5 1 V5" stroke="#c8321a"/><rect x="5" y="3" width="4" height="4" fill="#f4704c"/><path d="M5 6.5 H9 M8.5 3 V7" stroke="#c8321a"/><rect x="9" y="3" width="4" height="4" fill="#f4704c"/><path d="M9 6.5 H13 M12.5 3 V7" stroke="#c8321a"/><rect x="5" y="7" width="4" height="4" fill="#f4704c"/><path d="M5 10.5 H9 M8.5 7 V11" stroke="#c8321a"/><rect x="1" y="7" width="4" height="4" fill="#7fb0f4"/><path d="M1 10.5 H5 M4.5 7 V11" stroke="#2a58a8"/><rect x="9" y="7" width="4" height="4" fill="#7fb0f4"/><path d="M9 10.5 H13 M12.5 7 V11" stroke="#2a58a8"/><rect x="1" y="11" width="4" height="4" fill="#7fb0f4"/><path d="M1 14.5 H5 M4.5 11 V15" stroke="#2a58a8"/><rect x="5" y="11" width="4" height="4" fill="#7fb0f4"/><path d="M5 14.5 H9 M8.5 11 V15" stroke="#2a58a8"/><rect x="9" y="11" width="4" height="4" fill="#7fb0f4"/><path d="M9 14.5 H13 M12.5 11 V15" stroke="#2a58a8"/><rect x="13" y="11" width="4" height="4" fill="#7fb0f4"/><path d="M13 14.5 H17 M16.5 11 V15" stroke="#2a58a8"/></svg>
<div class="t" style="left:74px;top:177px;font-size:12px;line-height:16px;color:#000">Параметры сметы - БезИмени1</div>
<div style="left:756px;top:177px;width:27px;height:15px;border:1px solid #5f7697;border-radius:3px;background:linear-gradient(#d6e3f2,#bed1e8 50%,#a5bedb 51%,#bcd0e8)"><svg style="left:8px;top:0px" width="10" height="13" viewBox="0 0 10 13"><path d="M2 4 Q2 1 5 1 Q8 1 8 3.5 Q8 5 6 6 Q5 6.5 5 8" stroke="#3b4a5e" stroke-width="3.4" fill="none"/><path d="M2 4 Q2 1 5 1 Q8 1 8 3.5 Q8 5 6 6 Q5 6.5 5 8" stroke="#fff" stroke-width="1.8" fill="none"/><circle cx="5" cy="10.8" r="1.7" fill="#fff" stroke="#3b4a5e" stroke-width="0.8"/></svg></div>
<div style="left:786px;top:177px;width:28px;height:15px;border:1px solid #55171a;border-radius:3px;background:linear-gradient(#eeb2a2,#e08a75 45%,#c4452c 50%,#d35a40 80%,#e58e78)"><svg style="left:7px;top:2px" width="13" height="10" viewBox="0 0 13 10"><path d="M2 1.5 L11 8.5 M11 1.5 L2 8.5" stroke="#4a3030" stroke-width="3.8" stroke-linecap="square"/><path d="M2 1.5 L11 8.5 M11 1.5 L2 8.5" stroke="#fff" stroke-width="2.2" stroke-linecap="square"/></svg></div>
<div style="left:52px;top:195px;width:764px;height:412px;background:#f0f0f0"></div>
<div style="left:52px;top:195px;width:160px;height:377px;background:#fff;border:1px solid #828790"></div>
<div style="left:66px;top:205px;width:1px;height:25px;background:repeating-linear-gradient(#a0a0a0 0 1px,transparent 1px 2px)"></div>
<div style="left:66px;top:245px;width:1px;height:65px;background:repeating-linear-gradient(#a0a0a0 0 1px,transparent 1px 2px)"></div>
<div style="left:66px;top:325px;width:1px;height:33px;background:repeating-linear-gradient(#a0a0a0 0 1px,transparent 1px 2px)"></div>
<div style="left:66px;top:373px;width:1px;height:97px;background:repeating-linear-gradient(#a0a0a0 0 1px,transparent 1px 2px)"></div>
<div style="left:66px;top:485px;width:1px;height:73px;background:repeating-linear-gradient(#a0a0a0 0 1px,transparent 1px 2px)"></div>
<div style="left:67px;top:205px;width:9px;height:1px;background:repeating-linear-gradient(90deg,#a0a0a0 0 1px,transparent 1px 2px)"></div>
<div class="t" style="left:77px;top:197px;">Регион и зона</div>
<div style="left:67px;top:221px;width:9px;height:1px;background:repeating-linear-gradient(90deg,#a0a0a0 0 1px,transparent 1px 2px)"></div>
<div class="t" style="left:77px;top:213px;">МТСН</div>
<svg style="left:64px;top:234px" width="7" height="7"><path d="M6 0 L6 6 L0 6 Z" fill="#404040"/></svg>
<div style="left:73px;top:237px;width:1px;height:1px;background:#a0a0a0"></div>
<div class="t" style="left:77px;top:229px;">Расчет</div>
<div style="left:86px;top:253px;width:9px;height:1px;background:repeating-linear-gradient(90deg,#a0a0a0 0 1px,transparent 1px 2px)"></div>
<div class="t" style="left:96px;top:245px;">Округление цен</div>
<div style="left:86px;top:269px;width:9px;height:1px;background:repeating-linear-gradient(90deg,#a0a0a0 0 1px,transparent 1px 2px)"></div>
<div class="t" style="left:96px;top:261px;">Округление расх.</div>
<div style="left:86px;top:285px;width:9px;height:1px;background:repeating-linear-gradient(90deg,#a0a0a0 0 1px,transparent 1px 2px)"></div>
<div class="t" style="left:96px;top:277px;">Итоги</div>
<div style="left:67px;top:301px;width:9px;height:1px;background:repeating-linear-gradient(90deg,#a0a0a0 0 1px,transparent 1px 2px)"></div>
<div class="t" style="left:77px;top:293px;">Коэф-ты к итогам</div>
<svg style="left:64px;top:314px" width="7" height="7"><path d="M6 0 L6 6 L0 6 Z" fill="#404040"/></svg>
<div style="left:73px;top:317px;width:1px;height:1px;background:#a0a0a0"></div>
<div class="t" style="left:77px;top:309px;">НР и СП</div>
<div style="left:86px;top:333px;width:9px;height:1px;background:repeating-linear-gradient(90deg,#a0a0a0 0 1px,transparent 1px 2px)"></div>
<div class="t" style="left:96px;top:325px;">Виды работ</div>
<div style="left:86px;top:349px;width:9px;height:1px;background:repeating-linear-gradient(90deg,#a0a0a0 0 1px,transparent 1px 2px)"></div>
<div class="t" style="left:96px;top:341px;">К-ты к НР и СП</div>
<svg style="left:64px;top:362px" width="7" height="7"><path d="M6 0 L6 6 L0 6 Z" fill="#404040"/></svg>
<div style="left:73px;top:365px;width:1px;height:1px;background:#a0a0a0"></div>
<div class="t" style="left:77px;top:357px;">Индексы</div>
<div style="left:86px;top:381px;width:9px;height:1px;background:repeating-linear-gradient(90deg,#a0a0a0 0 1px,transparent 1px 2px)"></div>
<div class="t" style="left:96px;top:373px;">К позициям</div>
<div style="left:86px;top:397px;width:9px;height:1px;background:repeating-linear-gradient(90deg,#a0a0a0 0 1px,transparent 1px 2px)"></div>
<div class="t" style="left:96px;top:389px;">К ресурсам</div>
<div style="left:86px;top:413px;width:9px;height:1px;background:repeating-linear-gradient(90deg,#a0a0a0 0 1px,transparent 1px 2px)"></div>
<div class="t" style="left:96px;top:405px;">Доп. начисления</div>
<div style="left:86px;top:429px;width:9px;height:1px;background:repeating-linear-gradient(90deg,#a0a0a0 0 1px,transparent 1px 2px)"></div>
<div class="t" style="left:96px;top:421px;">Автозагрузка</div>
<div style="left:67px;top:445px;width:9px;height:1px;background:repeating-linear-gradient(90deg,#a0a0a0 0 1px,transparent 1px 2px)"></div>
<div class="t" style="left:77px;top:437px;">Переменные</div>
<div style="left:67px;top:461px;width:9px;height:1px;background:repeating-linear-gradient(90deg,#a0a0a0 0 1px,transparent 1px 2px)"></div>
<div class="t" style="left:77px;top:453px;">Лимит. затраты</div>
<svg style="left:64px;top:474px" width="7" height="7"><path d="M6 0 L6 6 L0 6 Z" fill="#404040"/></svg>
<div style="left:73px;top:477px;width:1px;height:1px;background:#a0a0a0"></div>
<div class="t" style="left:77px;top:469px;">Зимние</div>
<div style="left:86px;top:493px;width:9px;height:1px;background:repeating-linear-gradient(90deg,#a0a0a0 0 1px,transparent 1px 2px)"></div>
<div class="t" style="left:96px;top:485px;">Нормативы</div>
<div style="left:67px;top:509px;width:9px;height:1px;background:repeating-linear-gradient(90deg,#a0a0a0 0 1px,transparent 1px 2px)"></div>
<div class="t" style="left:77px;top:501px;">ОС и ССР</div>
<div style="left:67px;top:525px;width:9px;height:1px;background:repeating-linear-gradient(90deg,#a0a0a0 0 1px,transparent 1px 2px)"></div>
<div class="t" style="left:77px;top:517px;">Подписи</div>
<div style="left:67px;top:541px;width:9px;height:1px;background:repeating-linear-gradient(90deg,#a0a0a0 0 1px,transparent 1px 2px)"></div>
<div class="t" style="left:77px;top:533px;">Комментарий</div>
<div style="left:67px;top:557px;width:9px;height:1px;background:repeating-linear-gradient(90deg,#a0a0a0 0 1px,transparent 1px 2px)"></div>
<div class="t" style="left:77px;top:549px;">Акт выполн. работ</div>
<div style="left:85px;top:245px;width:1px;height:41px;background:repeating-linear-gradient(#a0a0a0 0 1px,transparent 1px 2px)"></div>
<div style="left:85px;top:325px;width:1px;height:25px;background:repeating-linear-gradient(#a0a0a0 0 1px,transparent 1px 2px)"></div>
<div style="left:85px;top:373px;width:1px;height:57px;background:repeating-linear-gradient(#a0a0a0 0 1px,transparent 1px 2px)"></div>
<div style="left:85px;top:485px;width:1px;height:9px;background:repeating-linear-gradient(#a0a0a0 0 1px,transparent 1px 2px)"></div>
<div style="left:75px;top:453px;width:89px;height:16px;background:linear-gradient(#fafafa,#ebebeb);border:1px solid #d6d6d6;border-radius:2px"></div>
<div class="t" style="left:77px;top:453px;">Лимит. затраты</div>
<div style="left:216px;top:195px;width:600px;height:20px;background:linear-gradient(90deg,#8c8c8c,#9c9c9c 40%,#a0a0a0)"></div>
<div class="t b" style="left:223px;top:197px;">Лимитированные затраты</div>
<div style="left:216px;top:215px;width:600px;height:26px;background:linear-gradient(#f6f8fb,#e9eff7 30%,#cfdff3 45%,#c9dbf2 70%,#dce8f7);border-top-left-radius:3px;border-bottom-left-radius:3px"></div>
<div style="left:216px;top:240px;width:600px;height:1px;background:#a9bfd9"></div>
<div style="left:221px;top:221px;width:2px;height:2px;background:#6f8fbf"></div>
<div style="left:221px;top:225px;width:2px;height:2px;background:#6f8fbf"></div>
<div style="left:221px;top:229px;width:2px;height:2px;background:#6f8fbf"></div>
<div style="left:221px;top:233px;width:2px;height:2px;background:#6f8fbf"></div>
<div style="left:254px;top:217px;width:1px;height:22px;background:#9bb3d2"></div>
<div style="left:356px;top:217px;width:1px;height:22px;background:#9bb3d2"></div>
<div style="left:536px;top:217px;width:1px;height:22px;background:#9bb3d2"></div>
<div style="left:655px;top:217px;width:1px;height:22px;background:#9bb3d2"></div>
<svg style="left:231px;top:220px" width="16" height="15" viewBox="0 0 16 15"><rect x="3.5" y="7.5" width="12" height="6" fill="#eef1f5" stroke="#7d8796"/><path d="M6 10 H14 M6 12 H14" stroke="#9aa3af"/><circle cx="6" cy="4.5" r="4" fill="#e8593a" stroke="#b8381e"/><path d="M3.5 4.5 H8.5" stroke="#fff" stroke-width="1.6"/></svg>
<svg style="left:262px;top:220px" width="15" height="14" viewBox="0 0 15 14"><path d="M0.5 1.5 H14.5 V13.5 H0.5 Z" fill="#f4f6f9" stroke="#7f8a99"/><path d="M7.5 1.5 V13.5" stroke="#7f8a99"/><path d="M2.5 4.5 H5.5 M2.5 7 H5.5 M2.5 9.5 H5.5 M9.5 4.5 H12.5 M9.5 7 H12.5 M9.5 9.5 H12.5" stroke="#b2bac5"/></svg>
<svg style="left:364px;top:221px" width="13" height="13" viewBox="0 0 13 13"><path d="M4.5 0.5 H8.5 V4.5 H12.5 V8.5 H8.5 V12.5 H4.5 V8.5 H0.5 V4.5 H4.5 Z" fill="#7fd35a" stroke="#3f9a2a"/></svg>
<svg style="left:444px;top:225px" width="13" height="5" viewBox="0 0 13 5"><rect x="0.5" y="0.5" width="12" height="4" rx="1" fill="#e85a5a" stroke="#c43a3a"/></svg>
<svg style="left:512px;top:220px" width="17" height="15" viewBox="0 0 17 15"><path d="M2 10 L9 3 L14 6 L7 13 Z" fill="#f2f4f7" stroke="#6f7885"/><path d="M1 14 H16" stroke="#6f7885"/></svg>
<svg style="left:545px;top:220px" width="13" height="15" viewBox="0 0 13 15"><path d="M6.5 0.5 L12.5 7 H9 V14.5 H4 V7 H0.5 Z" fill="#6fd04a" stroke="#3a9a25"/></svg>
<svg style="left:603px;top:220px" width="13" height="15" viewBox="0 0 13 15"><path d="M6.5 14.5 L12.5 8 H9 V0.5 H4 V8 H0.5 Z" fill="#d3d6da" stroke="#aeb3b9"/></svg>
<svg style="left:662px;top:220px" width="14" height="14" viewBox="0 0 14 14"><rect x="0.5" y="0.5" width="13" height="13" rx="1" fill="#7e83d6" stroke="#5358a8"/><rect x="3" y="1" width="8" height="5" fill="#f4f4ff"/><rect x="3.5" y="9" width="6" height="4" fill="#45488a"/></svg>
<svg style="left:683px;top:219px" width="18" height="15" viewBox="0 0 18 15"><path d="M0.5 3.5 H6 L7.5 5 H13.5 V14.5 H0.5 Z" fill="#e9c76a" stroke="#b48a2a"/><path d="M2.5 7.5 H17 L14 14.5 H0.5 Z" fill="#f7dd8a" stroke="#b48a2a"/><path d="M12 1 Q15 0 16 4" stroke="#3d8a3d" stroke-width="1.2" fill="none"/></svg>
<div class="t" style="left:281px;top:220px;color:#15428b;font-size:11.5px">Справочник</div>
<div class="t" style="left:383px;top:220px;color:#15428b;font-size:11.5px">Добавить</div>
<div class="t" style="left:462px;top:220px;color:#15428b;font-size:11.5px">Удалить</div>
<div class="t" style="left:562px;top:220px;color:#15428b;font-size:11.5px">Вверх</div>
<div class="t" style="left:620px;top:220px;color:#9aa7b8;font-size:11.5px">Вниз</div>
<div style="left:216px;top:241px;width:600px;height:331px;background:#fff"></div>
<div style="left:216px;top:241px;width:1px;height:306px;background:#a0a0a0"></div>
<div style="left:217px;top:241px;width:580px;height:18px;background:#efefef;border-top:1px solid #a0a0a0;border-bottom:1px solid #a0a0a0"></div>
<div style="left:527px;top:242px;width:1px;height:16px;background:#a0a0a0"></div>
<div style="left:687px;top:242px;width:1px;height:16px;background:#a0a0a0"></div>
<div style="left:767px;top:242px;width:1px;height:16px;background:#a0a0a0"></div>
<div style="left:797px;top:242px;width:1px;height:16px;background:#a0a0a0"></div>
<div class="t" style="left:222.0px;top:243px;width:300px;text-align:center;">Наименование статьи затрат</div>
<div class="t" style="left:532.0px;top:243px;width:150px;text-align:center;">Значение</div>
<div class="t" style="left:692.0px;top:243px;width:70px;text-align:center;">Ид.</div>
<div class="t" style="left:767.0px;top:243px;width:30px;text-align:center;">Ур.</div>
<div style="left:217px;top:259px;width:580px;height:17px;background:#c0dcc0"></div>
<div style="left:217px;top:275px;width:580px;height:1px;background:#c2c2c2"></div>
<div class="t b" style="left:230px;top:260px;">Глава 8. Временные здания и сооружения</div>
<div style="left:217px;top:276px;width:580px;height:17px;background:#c0dcc0"></div>
<div style="left:217px;top:292px;width:580px;height:1px;background:#c2c2c2"></div>
<div class="t b" style="left:230px;top:277px;">Глава 9. Прочие работы и затраты</div>
<div style="left:217px;top:293px;width:580px;height:17px;background:#c0dcc0"></div>
<div style="left:217px;top:309px;width:580px;height:1px;background:#c2c2c2"></div>
<div class="t b" style="left:230px;top:294px;">Глава 10. Содержание службы заказчика. Строительный контроль</div>
<div style="left:217px;top:310px;width:580px;height:17px;background:#c0dcc0"></div>
<div style="left:217px;top:326px;width:580px;height:1px;background:#c2c2c2"></div>
<div class="t b" style="left:230px;top:311px;">Глава 11. Подготовка эксплуатационных кадров для строящегося объекта капитального</div>
<div style="left:217px;top:327px;width:580px;height:17px;background:#c0dcc0"></div>
<div style="left:217px;top:343px;width:580px;height:1px;background:#c2c2c2"></div>
<div class="t b" style="left:230px;top:328px;">Глава 12. Проектные и изыскательские работы</div>
<div style="left:217px;top:344px;width:580px;height:17px;background:#c0dcc0"></div>
<div style="left:217px;top:360px;width:580px;height:1px;background:#c2c2c2"></div>
<div style="left:219px;top:348px;width:9px;height:9px;border:1px solid #8f8f8f;border-radius:1px;background:linear-gradient(#fff,#d8d8d8)"><div style="left:1px;top:3px;width:5px;height:1px;background:#2b4a9a"></div></div>
<div class="t b" style="left:230px;top:345px;">Непредвиденные затраты</div>
<div style="left:217px;top:361px;width:580px;height:18px;background:#fff"></div>
<div style="left:217px;top:378px;width:580px;height:1px;background:#c2c2c2"></div>
<div style="left:527px;top:361px;width:1px;height:18px;background:#c2c2c2"></div>
<div style="left:687px;top:361px;width:1px;height:18px;background:#c2c2c2"></div>
<div style="left:767px;top:361px;width:1px;height:18px;background:#c2c2c2"></div>
<div class="t" style="left:219px;top:363px;">Непредвиденные затраты</div>
<div style="left:217px;top:379px;width:580px;height:17px;background:#c0dcc0"></div>
<div style="left:217px;top:395px;width:580px;height:1px;background:#c2c2c2"></div>
<div class="t b" style="left:230px;top:380px;">Дополнительные затраты в текущих ценах</div>
<div style="left:217px;top:396px;width:580px;height:17px;background:#c0dcc0"></div>
<div style="left:217px;top:412px;width:580px;height:1px;background:#c2c2c2"></div>
<div style="left:219px;top:400px;width:9px;height:9px;border:1px solid #8f8f8f;border-radius:1px;background:linear-gradient(#fff,#d8d8d8)"><div style="left:1px;top:3px;width:5px;height:1px;background:#2b4a9a"></div></div>
<div class="t b" style="left:230px;top:397px;">Налоги и обязательные платежи</div>
<div style="left:217px;top:413px;width:580px;height:18px;background:#fff"></div>
<div style="left:217px;top:430px;width:580px;height:1px;background:#c2c2c2"></div>
<div style="left:527px;top:413px;width:1px;height:18px;background:#c2c2c2"></div>
<div style="left:687px;top:413px;width:1px;height:18px;background:#c2c2c2"></div>
<div style="left:767px;top:413px;width:1px;height:18px;background:#c2c2c2"></div>
<div class="t" style="left:219px;top:415px;">НДС</div>
<div style="left:217px;top:431px;width:580px;height:18px;background:#ffffb4"></div>
<div style="left:217px;top:448px;width:580px;height:1px;background:#c2c2c2"></div>
<div style="left:527px;top:431px;width:1px;height:18px;background:#c2c2c2"></div>
<div style="left:687px;top:431px;width:1px;height:18px;background:#c2c2c2"></div>
<div style="left:767px;top:431px;width:1px;height:18px;background:#c2c2c2"></div>
<div class="t" style="left:219px;top:433px;">убрать 10%</div>
<div class="t" style="right:331px;top:362px;text-align:right;">2%</div>
<div class="t" style="right:331px;top:414px;text-align:right;">18%</div>
<div class="t" style="right:331px;top:432px;text-align:right;">-10%</div>
<div class="t" style="right:221px;top:414px;text-align:right;">1</div>
<div class="t" style="right:221px;top:432px;text-align:right;">2</div>
<div style="left:798px;top:241px;width:16px;height:306px;background:linear-gradient(90deg,#e8e8e8,#f2f2f2 40%,#ededed)"></div>
<svg style="left:802px;top:247px" width="9" height="6"><path d="M0 5 L4.5 0.5 L9 5 Z" fill="#3a3a3a"/></svg>
<svg style="left:802px;top:537px" width="9" height="6"><path d="M0 0.5 L4.5 5 L9 0.5 Z" fill="#3a3a3a"/></svg>
<div style="left:799px;top:390px;width:15px;height:139px;border:1px solid #979797;border-radius:2px;background:linear-gradient(90deg,#f2f2f2,#e4e4e4 50%,#d2d2d2 51%,#dcdcdc)"></div>
<div style="left:803px;top:456px;width:6px;height:1px;background:#4d4d4d"></div>
<div style="left:803px;top:458px;width:6px;height:1px;background:#4d4d4d"></div>
<div style="left:803px;top:460px;width:6px;height:1px;background:#4d4d4d"></div>
<div style="left:224px;top:554px;width:13px;height:13px;border:1px solid #8e8f8f;background:linear-gradient(135deg,#dcdcdc,#fff)"><svg style="left:1px;top:0px" width="11" height="11"><path d="M2 5.5 L4.5 9 L9.5 1" stroke="#2c4f9e" stroke-width="2" fill="none"/></svg></div>
<div class="t" style="left:239px;top:553px;color:#000">В виде %</div>
<div style="left:318px;top:554px;width:13px;height:13px;border:1px solid #8e8f8f;background:linear-gradient(135deg,#dcdcdc,#fff)"><svg style="left:1px;top:0px" width="11" height="11"><path d="M2 5.5 L4.5 9 L9.5 1" stroke="#2c4f9e" stroke-width="2" fill="none"/></svg></div>
<div class="t" style="left:333px;top:553px;color:#000">Скрывать формулу в итогах</div>
<div style="left:509px;top:554px;width:13px;height:13px;border:1px solid #8e8f8f;background:linear-gradient(135deg,#dcdcdc,#fff)"></div>
<div class="t" style="left:524px;top:553px;color:#000">Скрывать 0 в итогах</div>
<div style="left:655px;top:554px;width:13px;height:13px;border:1px solid #8e8f8f;background:linear-gradient(135deg,#dcdcdc,#fff)"></div>
<div class="t" style="left:670px;top:553px;color:#8d8d8d">Входит в СМР</div>
<div style="left:735px;top:579px;width:73px;height:21px;border:1px solid #707070;border-radius:3px;background:linear-gradient(#f2f2f2,#ebebeb 50%,#dddddd 51%,#cfcfcf)"></div>
<div class="t" style="left:751.0px;top:582px;width:40px;text-align:center;">OK</div>
<div style="left:774px;top:404px;width:35px;height:55px;background:#80ff80;mix-blend-mode:darken"></div>
<svg style="left:0;top:0" width="1016" height="939" viewBox="0 0 1016 939"><defs><filter id="sh" x="-20%" y="-50%" width="140%" height="200%"><feGaussianBlur stdDeviation="2"/></filter></defs><g opacity="0.45" filter="url(#sh)"><path d="M812 443 H863" stroke="#000" stroke-width="4"/><path d="M801 443 L815 436 L815 450 Z" fill="#000"/></g><path d="M813 439.5 H857" stroke="#c00000" stroke-width="3.6"/><path d="M799 439.5 L814 432 L814 447 Z" fill="#c00000"/><path d="M658 450 L931 821" stroke="#9966cc" stroke-width="3.4"/><path d="M652 441.5 L655 458.5 L667.5 449.5 Z" fill="#9966cc"/><path d="M936.5 829 L922 822 L934 813.5 Z" fill="#9966cc"/></svg>
</body></html>
